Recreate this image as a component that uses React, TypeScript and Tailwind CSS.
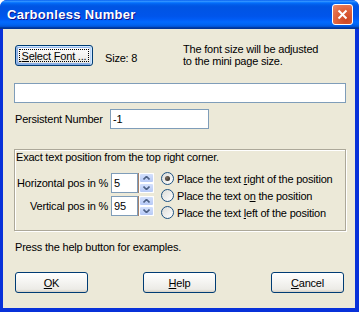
import React from 'react';

const font = { fontFamily: '"Liberation Sans", Arial, sans-serif' };

function XpButton({
  children,
  focused,
  className = '',
}: {
  children: React.ReactNode;
  focused?: boolean;
  className?: string;
}) {
  return (
    <button
      className={`relative flex items-center justify-center rounded-[3px] border border-[#003c74] bg-[linear-gradient(180deg,#ffffff,#ecebe6_86%,#d6d0c5)] text-[11px] leading-[12px] tracking-[-0.2px] text-black ${
        focused
          ? 'shadow-[inset_-1px_1px_#cee7ff,inset_1px_2px_#98b8ea,inset_-2px_2px_#bcd4f6,inset_1px_-1px_#89ade4,inset_2px_-2px_#89ade4]'
          : ''
      } ${className}`}
    >
      {focused && (
        <span className="pointer-events-none absolute inset-[3px] border border-dotted border-black" />
      )}
      {children}
    </button>
  );
}

function Spinner() {
  return (
    <div className="flex h-[20px] w-[16px] flex-col border-l border-[#a4806a] bg-white">
      {[0, 1].map((i) => (
        <div
          key={i}
          className="flex flex-1 items-center justify-center rounded-[2px] border border-white bg-[linear-gradient(180deg,#d3e0fc,#b6c9f6)]"
        >
          <svg width="7" height="4" viewBox="0 0 7 4">
            <path
              d={i === 0 ? 'M0.5 3.5 L3.5 0.5 L6.5 3.5' : 'M0.5 0.5 L3.5 3.5 L6.5 0.5'}
              fill="none"
              stroke="#4d6185"
              strokeWidth="1.6"
            />
          </svg>
        </div>
      ))}
    </div>
  );
}

function Radio({ checked, children }: { checked?: boolean; children: React.ReactNode }) {
  return (
    <div className="flex h-[17px] items-center gap-[3px]">
      <span className="flex h-[13px] w-[13px] items-center justify-center rounded-full border border-[#1c5180] bg-[linear-gradient(135deg,#dcdcd7,#ffffff)]">
        {checked && (
          <span className="h-[5px] w-[5px] rounded-full bg-[radial-gradient(circle_at_35%_35%,#7a6a5a,#202020)]" />
        )}
      </span>
      <span className="whitespace-nowrap">{children}</span>
    </div>
  );
}

export default function App() {
  return (
    <div
      className="flex h-[312px] w-[359px] flex-col overflow-hidden rounded-t-[7px] bg-[#0831d9] text-black"
      style={font}
    >
      {/* Title bar */}
      <div className="flex h-[29px] shrink-0 items-center justify-between bg-[linear-gradient(180deg,#0058ee_0%,#3593ff_4%,#288eff_6%,#127dff_8%,#036ffc_10%,#0262ee_14%,#0057e5_20%,#0054e3_24%,#0055eb_56%,#005bf5_66%,#026afe_76%,#0062ef_86%,#0052d6_92%,#0040ab_94%,#003092_100%)] pl-[7px] pr-[6px]">
        <span className="text-[13px] font-bold tracking-[0.3px] text-white [text-shadow:1px_1px_#0f1089]">
          Carbonless Number
        </span>
        <div className="flex h-[21px] w-[21px] items-center justify-center rounded-[3px] border border-white bg-[radial-gradient(circle_at_70%_80%,#cc4622,#e0643e_55%,#ec8a6a)]">
          <svg width="11" height="11" viewBox="0 0 11 11">
            <path d="M1.5 1.5 L9.5 9.5 M9.5 1.5 L1.5 9.5" stroke="#fff" strokeWidth="2" />
          </svg>
        </div>
      </div>

      {/* Body */}
      <div className="mb-[4px] ml-[3px] mr-[4px] flex flex-1 flex-col bg-[#ece9d8] pl-[11px] pr-[9px] text-[11px] leading-[12px] tracking-[-0.2px]">
        <div className="mt-[13px] flex items-start">
          <XpButton focused className="ml-[1px] mt-[3px] h-[21px] w-[78px]">
            <span>
              <u>S</u>elect Font ...
            </span>
          </XpButton>
          <span className="ml-[12px] mt-[10px] w-[78px]">Size: 8</span>
          <div className="mt-[1px]">
            <div>The font size will be adjusted</div>
            <div>to the mini page size.</div>
          </div>
        </div>

        <div className="mt-[16px] h-[20px] w-[332px] border border-[#7f9db9] bg-white" />

        <div className="mt-[6px] flex items-center">
          <span className="ml-[1px] w-[95px] whitespace-nowrap">Persistent Number</span>
          <div className="flex h-[20px] w-[99px] items-center border border-[#7f9db9] bg-white pl-[2px]">
            -1
          </div>
        </div>

        {/* Group */}
        <div className="mt-[20px] h-[82px] w-[332px] border border-[#aca899] pl-[1px] shadow-[inset_1px_1px_#ffffff,1px_1px_#ffffff]">
          <div className="mt-[1px]">Exact text position from the top right corner.</div>
          <div className="mt-[7px] flex">
            <div className="flex flex-col gap-[3px] pt-[3px]">
              <div className="flex items-center">
                <span className="w-[92px] whitespace-nowrap text-right">Horizontal pos in %</span>
                <div className="ml-[3px] flex h-[20px] w-[27px] items-center border border-[#7f9db9] bg-white pl-[2px]">
                  5
                </div>
                <Spinner />
              </div>
              <div className="flex items-center">
                <span className="w-[92px] whitespace-nowrap text-right">Vertical pos in %</span>
                <div className="ml-[3px] flex h-[20px] w-[27px] items-center border border-[#7f9db9] bg-white pl-[2px]">
                  95
                </div>
                <Spinner />
              </div>
            </div>
            <div className="ml-[7px] flex flex-col">
              <Radio checked>
                Place the text <u>r</u>ight of the position
              </Radio>
              <Radio>
                Place the text o<u>n</u> the position
              </Radio>
              <Radio>
                Place the text <u>l</u>eft of the position
              </Radio>
            </div>
          </div>
        </div>

        <div className="ml-[1px] mt-[10px]">Press the help button for examples.</div>

        <div className="ml-[1px] mr-[2px] mt-[19px] flex justify-between">
          <XpButton className="h-[21px] w-[73px]">
            <span>
              <u>O</u>K
            </span>
          </XpButton>
          <XpButton className="h-[21px] w-[73px]">
            <span>
              <u>H</u>elp
            </span>
          </XpButton>
          <XpButton className="h-[21px] w-[73px]">
            <span>
              <u>C</u>ancel
            </span>
          </XpButton>
        </div>
      </div>
    </div>
  );
}
